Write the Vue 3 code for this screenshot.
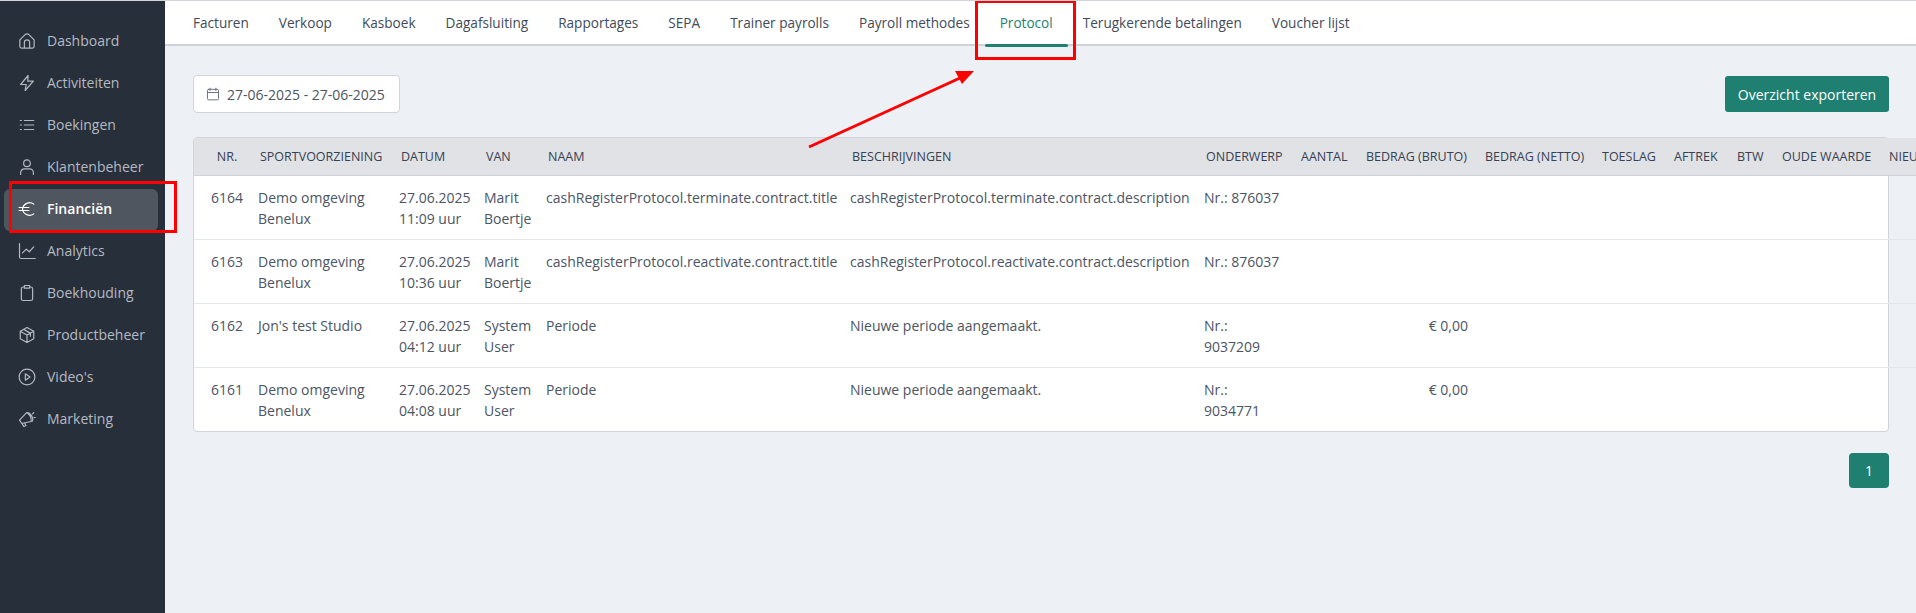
<script setup>
const nav = [
  { label: 'Dashboard', icon: 'home' },
  { label: 'Activiteiten', icon: 'bolt' },
  { label: 'Boekingen', icon: 'list' },
  { label: 'Klantenbeheer', icon: 'user' },
  { label: 'Financiën', icon: 'euro', active: true },
  { label: 'Analytics', icon: 'chart' },
  { label: 'Boekhouding', icon: 'clip' },
  { label: 'Productbeheer', icon: 'cube' },
  { label: "Video's", icon: 'play' },
  { label: 'Marketing', icon: 'mega' }
]
const icons = {
  home: 'M2.500 10.500 9.500 3.500a3.500 3.500 0 0 1 5 0l7 7V19a2.500 2.500 0 0 1-2.500 2.500H5A2.500 2.500 0 0 1 2.500 19ZM8.500 21.500V14a3.500 3.500 0 0 1 7 0v7.500',
  bolt: 'M13.500 2 3.500 14h7.500l-1.500 8 11-12.500h-7.500Z',
  list: 'M8.500 6H21M8.500 12H21M8.500 18H21M3 6h1.500M3 12h1.500M3 18h1.500',
  user: 'M12 2.500a4.500 4.500 0 1 0 0 9 4.500 4.500 0 0 0 0-9ZM3.500 22v-2.500a5 5 0 0 1 5-5h7a5 5 0 0 1 5 5V22',
  euro: 'M21 5.500A9.500 9.500 0 0 0 6 12a9.500 9.500 0 0 0 15 6.500M1.500 10h13M1.500 14h13',
  chart: 'M2 2v17.500A2.500 2.500 0 0 0 4.500 22H23M6 14.500l5-5 4 3.500 6-6.500',
  clip: 'M8.500 4H7A2.500 2.500 0 0 0 4.500 6.500v13A2.500 2.500 0 0 0 7 22h10a2.500 2.500 0 0 0 2.500-2.500v-13A2.500 2.500 0 0 0 17 4h-1.500M8.500 2h7v3.500h-7Z',
  cube: 'M12 2 3 7v10l9 5 9-5V7ZM3 7l9 5 9-5M12 12v10M7.500 4.500l9 5v4',
  play: 'M12 1.500a10.500 10.500 0 1 0 0 21 10.500 10.500 0 0 0 0-21ZM9.800 7.800l6.200 4.200-6.200 4.200Z',
  mega: 'M11.500 3.500Q15 2.500 18 7.500Q21 12.500 19 15L5 18 2 13.500ZM5.500 18 7.500 22l3-1-1.500-3.800M13 4.500q2 1 3.500 4t1 6M19.500 5l1.500-1.500M21.500 10H23'
}
const tabs = ['Facturen', 'Verkoop', 'Kasboek', 'Dagafsluiting', 'Rapportages', 'SEPA', 'Trainer payrolls', 'Payroll methodes', 'Protocol', 'Terugkerende betalingen', 'Voucher lijst']
const columns = [
  { label: 'Nr.', w: 55 }, { label: 'Sportvoorziening', w: 141 }, { label: 'Datum', w: 85 }, { label: 'Van', w: 62 },
  { label: 'Naam', w: 304 }, { label: 'Beschrijvingen', w: 354 }, { label: 'Onderwerp', w: 95 }, { label: 'Aantal', w: 65 },
  { label: 'Bedrag (bruto)', w: 119 }, { label: 'Bedrag (netto)', w: 117 }, { label: 'Toeslag', w: 72 }, { label: 'Aftrek', w: 63 },
  { label: 'BTW', w: 45 }, { label: 'Oude waarde', w: 107 }, { label: 'Nieuwe waarde', w: 120 }
]
const rows = [
  { nr: 6164, sport: 'Demo omgeving Benelux', date: '27.06.2025', time: '11:09 uur', van: 'Marit Boertje', naam: 'cashRegisterProtocol.terminate.contract.title', desc: 'cashRegisterProtocol.terminate.contract.description', ond: 'Nr.: 876037', bruto: '' },
  { nr: 6163, sport: 'Demo omgeving Benelux', date: '27.06.2025', time: '10:36 uur', van: 'Marit Boertje', naam: 'cashRegisterProtocol.reactivate.contract.title', desc: 'cashRegisterProtocol.reactivate.contract.description', ond: 'Nr.: 876037', bruto: '' },
  { nr: 6162, sport: "Jon's test Studio", date: '27.06.2025', time: '04:12 uur', van: 'System User', naam: 'Periode', desc: 'Nieuwe periode aangemaakt.', ond: 'Nr.: 9037209', bruto: '€ 0,00' },
  { nr: 6161, sport: 'Demo omgeving Benelux', date: '27.06.2025', time: '04:08 uur', van: 'System User', naam: 'Periode', desc: 'Nieuwe periode aangemaakt.', ond: 'Nr.: 9034771', bruto: '€ 0,00' }
]
const tableWidth = columns.reduce((s, c) => s + c.w, 0)
</script>

<template>
  <div class="app">
    <aside class="sidebar">
      <a v-for="n in nav" :key="n.label" class="nav-item" :class="{ active: n.active }">
        <svg class="nav-icon" viewBox="0 0 24 24"><path :d="icons[n.icon]" /></svg>
        <span>{{ n.label }}</span>
      </a>
    </aside>
    <main class="main">
      <nav class="tabs">
        <a v-for="t in tabs" :key="t" class="tab" :class="{ current: t === 'Protocol' }">{{ t }}</a>
      </nav>
      <div class="content">
        <div class="toolbar">
          <button class="date-btn">
            <svg class="cal" viewBox="0 0 24 24"><path d="M7 2v4M17 2v4M2.500 9.500h19M4.500 4h15a2 2 0 0 1 2 2v14a2 2 0 0 1-2 2h-15a2 2 0 0 1-2-2V6a2 2 0 0 1 2-2Z" /></svg>
            27-06-2025 - 27-06-2025
          </button>
          <button class="export">Overzicht exporteren</button>
        </div>
        <div class="card">
          <table class="grid" :style="{ width: tableWidth + 'px' }">
            <colgroup><col v-for="c in columns" :key="c.label" :style="{ width: c.w + 'px' }" /></colgroup>
            <thead>
              <tr><th v-for="c in columns" :key="c.label">{{ c.label }}</th></tr>
            </thead>
            <tbody>
              <tr v-for="r in rows" :key="r.nr">
                <td>{{ r.nr }}</td>
                <td>{{ r.sport }}</td>
                <td>{{ r.date }}<br />{{ r.time }}</td>
                <td>{{ r.van }}</td>
                <td>{{ r.naam }}</td>
                <td>{{ r.desc }}</td>
                <td>{{ r.ond }}</td>
                <td></td>
                <td class="num">{{ r.bruto }}</td>
                <td></td><td></td><td></td><td></td><td></td><td></td>
              </tr>
            </tbody>
          </table>
        </div>
        <div class="pager"><button class="page">1</button></div>
      </div>
    </main>
    <div class="mark mark-side"></div>
    <div class="mark mark-tab"></div>
    <svg class="arrow" viewBox="0 0 1916 613">
      <line x1="809" y1="147" x2="960" y2="78" />
      <polygon points="974,71 955,71 962,84" />
    </svg>
  </div>
</template>

<style>
html, body { margin: 0; overflow: hidden; }
</style>

<style scoped>
.app {
  position: relative;
  display: flex;
  width: 1916px;
  height: 613px;
  overflow: hidden;
  box-sizing: border-box;
  border-top: 1px solid #d1d5db;
  font-family: "Open Sans", sans-serif;
  color: #4b5563;
  background: #edf0f5;
}
.sidebar {
  width: 165px;
  flex: none;
  box-sizing: border-box;
  background: #272f3a;
  padding: 20px 7px 0 4px;
  display: flex;
  flex-direction: column;
}
.nav-item {
  display: flex;
  align-items: center;
  height: 42px;
  box-sizing: border-box;
  padding: 0 0 3px 14px;
  border-radius: 6px;
  font-size: 14px;
  color: #b5bac2;
}
.nav-item.active {
  background: #50565f;
  color: #fff;
  font-weight: 600;
}
.nav-icon {
  width: 18px;
  height: 18px;
  margin-right: 11px;
  fill: none;
  stroke: currentColor;
  stroke-width: 1.600;
  stroke-linecap: round;
  stroke-linejoin: round;
  flex: none;
}
.main { flex: 1; min-width: 0; display: flex; flex-direction: column; }
.tabs {
  height: 45px;
  box-sizing: border-box;
  display: flex;
  background: #fff;
  border-bottom: 2px solid #cfd3d8;
  padding-left: 13px;
}
.tab {
  position: relative;
  padding: 0 15px;
  line-height: 43px;
  font-size: 13.600px;
  font-weight: 500;
  white-space: nowrap;
  color: #414b59;
}
.tab.current { color: #1f7f70; }
.tab.current::after {
  content: "";
  position: absolute;
  left: 0;
  right: 0;
  bottom: -3px;
  height: 3px;
  border-radius: 2px;
  background: #1f7f70;
}
.content { padding: 29px 27px 0 28px; }
.toolbar { display: flex; justify-content: space-between; align-items: center; }
.date-btn {
  display: flex;
  align-items: center;
  width: 207px;
  height: 38px;
  box-sizing: border-box;
  padding: 0 0 0 12px;
  background: #fff;
  border: 1px solid #d1d5db;
  border-radius: 4px;
  font: 14px "Open Sans", sans-serif;
  color: #4b5563;
}
.cal {
  width: 14px;
  height: 14px;
  margin-right: 7px;
  fill: none;
  stroke: #6b7280;
  stroke-width: 1.700;
  stroke-linecap: round;
}
.export {
  width: 164px;
  height: 36px;
  background: #1f7f70;
  color: #fff;
  border: 0;
  border-radius: 3px;
  font: 14px "Open Sans", sans-serif;
}
.card {
  margin-top: 24px;
  background: #fff;
  border: 1px solid #d1d5db;
  border-radius: 4px;
  height: 293px;
}
.grid { border-collapse: collapse; table-layout: fixed; }
.grid th {
  height: 37px;
  padding: 0 0 0 11px;
  background: #e0e2e6;
  border-bottom: 1px solid #d1d5db;
  text-align: left;
  font-size: 12.500px;
  font-weight: 500;
  text-transform: uppercase;
  white-space: nowrap;
  overflow: hidden;
  color: #374151;
}
.grid td {
  height: 63px;
  box-sizing: border-box;
  padding: 11px 4px 10px 9px;
  border-bottom: 1px solid #e5e7eb;
  font-size: 14px;
  line-height: 21px;
  vertical-align: top;
  color: #4b5563;
}
.grid tbody tr:last-child td { border-bottom: 0; }
.grid th:first-child, .grid td:first-child { text-align: center; padding-left: 11px; padding-right: 0; }
.grid td.num { text-align: right; padding-right: 6px; }
.pager { display: flex; justify-content: flex-end; margin-top: 21px; }
.page {
  width: 40px;
  height: 35px;
  background: #1f7f70;
  color: #fff;
  border: 0;
  border-radius: 4px;
  font: 14px "Open Sans", sans-serif;
}
.mark { position: absolute; border: 3px solid #f00; box-sizing: border-box; pointer-events: none; }
.mark-side { left: 9px; top: 180px; width: 168px; height: 52px; }
.mark-tab { left: 975px; top: -1px; width: 101px; height: 60px; }
.arrow { position: absolute; left: 0; top: -1px; width: 1916px; height: 613px; pointer-events: none; }
.arrow line { stroke: #f00; stroke-width: 3; }
.arrow polygon { fill: #f00; }
</style>
